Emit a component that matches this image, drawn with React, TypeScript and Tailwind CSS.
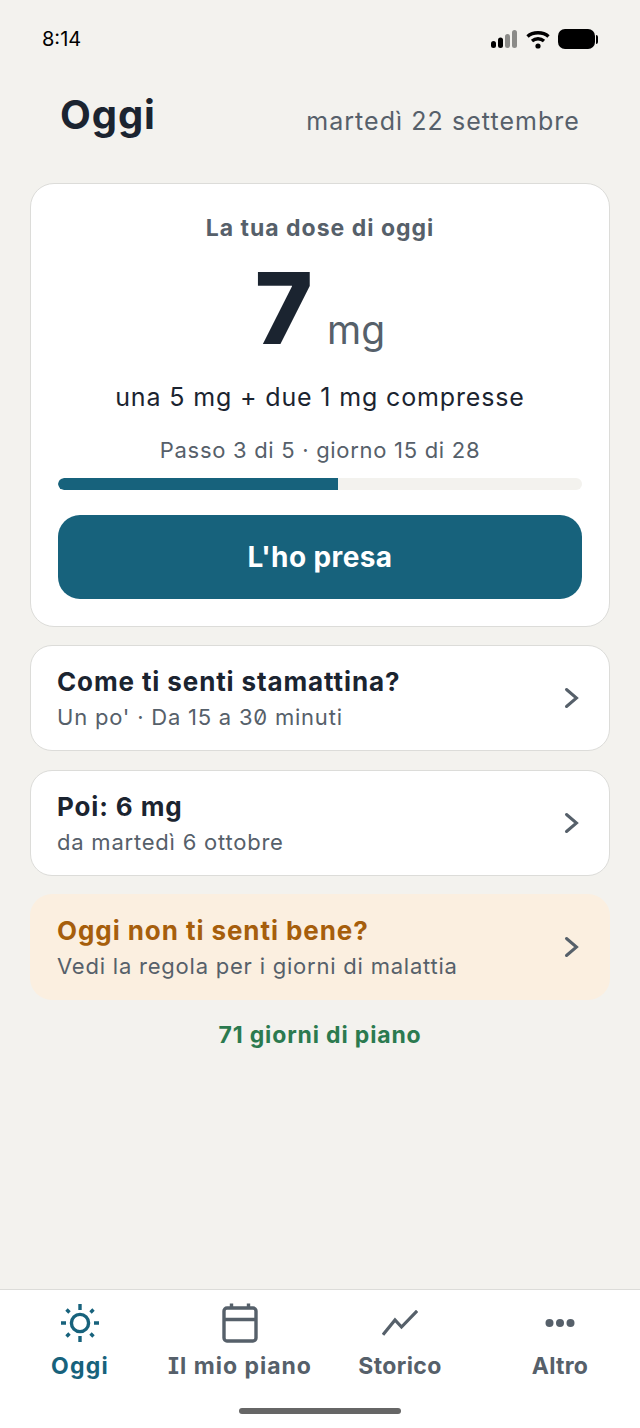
const FONT = "font-['Inter','Liberation_Sans',sans-serif]"

function Chevron() {
  return (
    <svg width="16" height="22" viewBox="0 0 16 22" fill="none" className="shrink-0">
      <path d="M2.5 2.5 L12.5 11 L2.5 19.5" stroke="#56606a" strokeWidth="3" strokeLinecap="round" strokeLinejoin="miter" />
    </svg>
  )
}

function RowCard({ title, sub, warm }: { title: string; sub: string; warm?: boolean }) {
  return (
    <div className={warm
      ? 'flex h-[106px] items-center justify-between rounded-[22px] bg-[#fbefe0] pl-[27px] pr-[30px]'
      : 'flex h-[106px] items-center justify-between rounded-[22px] border border-[#dcdcd9] bg-white pl-[26px] pr-[29px]'}>
      <div className="pt-[1px]">
        <div className={warm
          ? 'text-[26px] leading-[32px] font-bold tracking-[0.93px] text-[#a65e0c]'
          : 'text-[26px] leading-[32px] font-bold tracking-[0.88px] text-[#1b2430]'}>{title}</div>
        <div className="mt-[4px] text-[22px] leading-[30px] tracking-[0.78px] text-[#56606a] slashed-zero">{sub}</div>
      </div>
      <Chevron />
    </div>
  )
}

function SunIcon() {
  return (
    <svg width="40" height="40" viewBox="0 0 40 40" fill="none" stroke="#17627c" strokeWidth="3.4">
      <circle cx="20" cy="20" r="8.6" />
      <path d="M20 1v6M20 33v6M1 20h5M34 20h5M6.5 6.5l3 3M30.5 30.5l3 3M6.5 33.5l3-3M30.5 9.500l3-3" />
    </svg>
  )
}

function CalendarIcon() {
  return (
    <svg width="36" height="40" viewBox="0 0 36 40" fill="none" stroke="#56606a" strokeWidth="3.4">
      <rect x="2" y="5" width="32" height="33" rx="3" />
      <path d="M2 16.500h32M9.500 0.500v5M26.500 0.500v5" />
    </svg>
  )
}

function TrendIcon() {
  return (
    <svg width="36" height="26" viewBox="0 0 36 26" fill="none" stroke="#56606a" strokeWidth="3.2" strokeLinecap="square">
      <path d="M2 23.500 L13 10 L19.500 17 L34 2" />
    </svg>
  )
}

function DotsIcon() {
  return (
    <svg width="30" height="10" viewBox="0 0 30 10" fill="#56606a">
      <circle cx="4.500" cy="5" r="4" />
      <circle cx="15" cy="5" r="4" />
      <circle cx="25.500" cy="5" r="4" />
    </svg>
  )
}

function Tab({ label, className, children }: { label: string; className: string; children: React.ReactNode }) {
  return (
    <div className="flex flex-col items-center">
      <div className="flex h-[40px] items-center justify-center">{children}</div>
      <div className={className}>{label}</div>
    </div>
  )
}

export default function App() {
  return (
    <div className={`${FONT} flex h-[1428px] w-[640px] flex-col overflow-hidden bg-[#f3f2ee]`}>
      {/* Status bar */}
      <div className="flex h-[78px] shrink-0 items-center justify-between pl-[42px] pr-[42px]">
        <span className="text-[20px] font-normal text-black">8:14</span>
        <div className="flex items-center gap-[7px]">
          <svg width="27" height="18" viewBox="0 0 27 18" className="mr-[1px]">
            <rect x="0" y="11" width="5" height="7" rx="2.500" fill="#000" />
            <rect x="7" y="7.500" width="5" height="10.500" rx="2.500" fill="#000" />
            <rect x="14" y="4" width="5" height="14" rx="2.500" fill="#8b8b88" />
            <rect x="21" y="0" width="5" height="18" rx="2.500" fill="#8b8b88" />
          </svg>
          <svg width="24" height="19" viewBox="0 0 24 19" fill="none" stroke="#000" strokeWidth="3.400">
            <path d="M1.500 6.500 C7 1.500 17 1.500 22.500 6.500" />
            <path d="M6 11 C9.500 8 14.500 8 18 11" />
            <circle cx="12" cy="16" r="2.600" fill="#000" stroke="none" />
          </svg>
          <div className="ml-[1px] flex items-center gap-[1px]">
            <div className="h-[20px] w-[37px] rounded-[7px] bg-black" />
            <div className="h-[9px] w-[2px] rounded-r-sm bg-black" />
          </div>
        </div>
      </div>

      {/* Header */}
      <div className="flex h-[105px] shrink-0 items-start justify-between pl-[60px] pr-[60px]">
        <h1 className="mt-[12px] text-[40px] leading-[50px] font-bold tracking-[0.9px] text-[#1b2430]">Oggi</h1>
        <span className="mt-[26px] text-[25px] leading-[34px] tracking-[1.05px] text-[#56606a]">martedì 22 settembre</span>
      </div>

      <main className="flex flex-1 flex-col px-[30px]">
        {/* Dose card */}
        <section className="flex h-[444px] flex-col items-center rounded-[24px] border border-[#dcdcd9] bg-white px-[27px] pt-[28px]">
          <div className="text-[23px] leading-[32px] font-bold tracking-[1px] text-[#56606a]">La tua dose di oggi</div>
          <div className="mt-[18px] flex h-[92px] items-baseline justify-center">
            <span className="text-[99px] leading-[92px] font-extrabold text-[#1b2430]">7</span>
            <span className="ml-[14px] text-[39px] leading-[40px] text-[#56606a]">mg</span>
          </div>
          <div className="mt-[26px] text-[25px] leading-[34px] tracking-[0.85px] text-[#1b2430]">una 5 mg + due 1 mg compresse</div>
          <div className="mt-[21px] text-[22px] leading-[30px] tracking-[0.7px] text-[#56606a]">Passo 3 di 5 · giorno 15 di 28</div>
          <div className="mt-[13px] h-[12px] w-full overflow-hidden rounded-full bg-[#f3f2ee]">
            <div className="h-full w-[280px] rounded-l-full bg-[#17627c]" />
          </div>
          <button className="mt-[25px] flex h-[84px] w-full items-center justify-center rounded-[22px] bg-[#17627c] text-[28px] font-bold tracking-[0.4px] text-white">
            L'ho presa
          </button>
        </section>

        <div className="mt-[18px] flex flex-col gap-[19px]">
          <RowCard title="Come ti senti stamattina?" sub="Un po' · Da 15 a 30 minuti" />
          <RowCard title="Poi: 6 mg" sub="da martedì 6 ottobre" />
        </div>
        <div className="mt-[18px]">
          <RowCard warm title="Oggi non ti senti bene?" sub="Vedi la regola per i giorni di malattia" />
        </div>
        <div className="mt-[19px] text-center text-[23px] leading-[32px] font-bold tracking-[0.85px] text-[#2b7a4f]">71 giorni di piano</div>
      </main>

      {/* Bottom nav */}
      <nav className="h-[139px] shrink-0 border-t border-[#dcdcd9] bg-white">
        <div className="grid grid-cols-4 pt-[13px]">
          <Tab label="Oggi" className="mt-[8px] text-[23px] leading-[30px] font-bold tracking-[1.2px] text-[#17627c]"><SunIcon /></Tab>
          <Tab label="Il mio piano" className="mt-[8px] text-[23px] leading-[30px] font-bold tracking-[1px] text-[#56606a] [font-feature-settings:'cv08']"><CalendarIcon /></Tab>
          <Tab label="Storico" className="mt-[8px] text-[23px] leading-[30px] font-bold tracking-[0.36px] text-[#56606a]"><TrendIcon /></Tab>
          <Tab label="Altro" className="mt-[8px] text-[23px] leading-[30px] font-bold tracking-[0.3px] text-[#56606a]"><DotsIcon /></Tab>
        </div>
        <div className="mx-auto mt-[27px] h-[6px] w-[162px] rounded-full bg-[#666666]" />
      </nav>
    </div>
  )
}
